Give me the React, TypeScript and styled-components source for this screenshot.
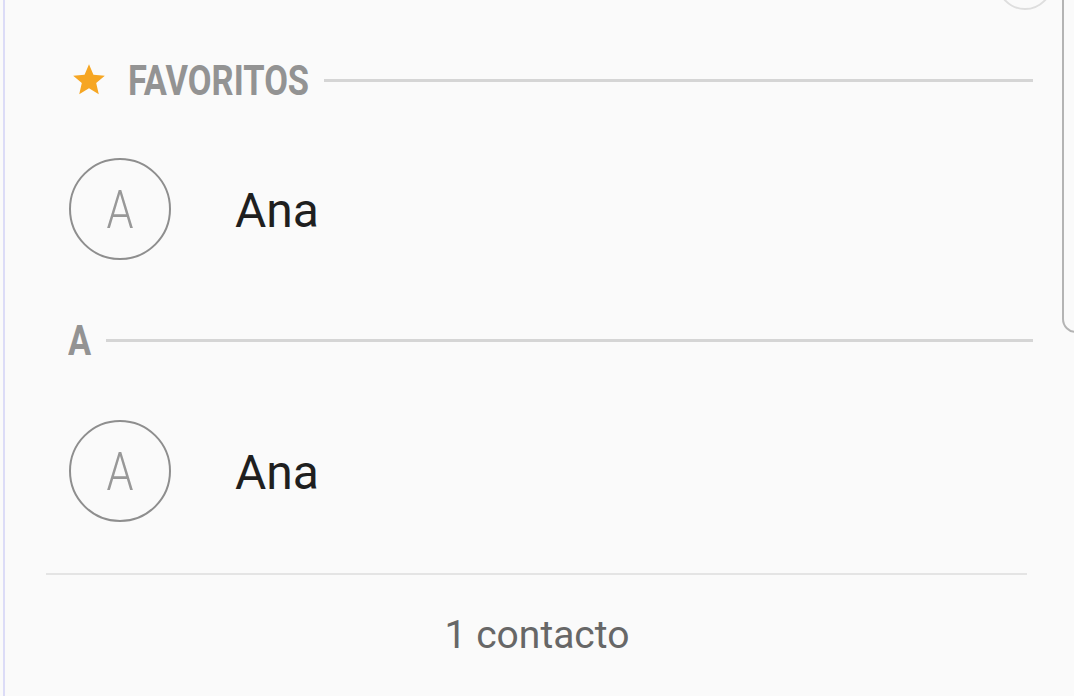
import React from "react";
import styled, { createGlobalStyle } from "styled-components";

const Global = createGlobalStyle`
  html, body { margin: 0; padding: 0; background: #fafafa; }
  body { font-family: Roboto, "Noto Sans", "Liberation Sans", sans-serif; }
`;

const Screen = styled.div`
  position: relative;
  width: 1074px;
  height: 696px;
  overflow: hidden;
  background: #fafafa;
  padding-left: 3px;
  box-sizing: border-box;
`;

const Panel = styled.div`
  height: 100%;
  border-left: 2px solid #dcdcf7;
  display: flex;
  flex-direction: column;
  padding-top: 50px;
  box-sizing: border-box;
`;

const SectionHeader = styled.div<{ $h: number; $left: number }>`
  display: flex;
  align-items: center;
  height: ${(p) => p.$h}px;
  padding-left: ${(p) => p.$left}px;
  padding-right: 41px;
`;

const StarIcon = styled.svg`
  width: 38px;
  height: 38px;
  flex: none;
  margin-right: 20px;
  margin-top: -2px;
`;

const HeaderLabel = styled.span<{ $w: number }>`
  display: inline-block;
  font-family: Roboto, sans-serif;
  font-weight: 700;
  font-size: 42px;
  line-height: 1;
  color: #939393;
  transform: scaleX(0.82);
  transform-origin: left center;
  width: ${(p) => p.$w}px;
  white-space: nowrap;
  flex: none;
`;

const HeaderLine = styled.div`
  flex: 1;
  height: 3px;
  background: #d5d5d5;
  margin-left: 16px;
`;

const ContactRow = styled.div<{ $h: number }>`
  display: flex;
  align-items: center;
  height: ${(p) => p.$h}px;
  padding-left: 64px;
`;

const Avatar = styled.div`
  width: 98px;
  height: 98px;
  border: 2px solid #8e8e8e;
  border-radius: 50%;
  display: flex;
  align-items: center;
  justify-content: center;
  flex: none;
`;

const AvatarLetter = styled.span`
  font-family: Roboto, sans-serif;
  font-weight: 300;
  font-size: 54px;
  line-height: 1;
  color: #989898;
  transform: scaleX(0.8);
  margin-top: 3px;
`;

const Name = styled.span`
  margin-left: 64px;
  font-family: Roboto, sans-serif;
  font-weight: 400;
  font-size: 48px;
  line-height: 1;
  color: #1f1f1f;
  margin-top: 4px;
`;

const Divider = styled.div`
  height: 2px;
  background: #e4e4e4;
  margin: 7px 47px 0 41px;
`;

const Footer = styled.div`
  display: flex;
  justify-content: center;
  align-items: center;
  height: 122px;
  margin-left: -5px;
  font-family: Roboto, sans-serif;
  font-size: 39px;
  line-height: 1;
  color: #676767;
`;

const TopCircle = styled.div`
  position: absolute;
  left: 997px;
  top: -46px;
  width: 52px;
  height: 52px;
  border: 2px solid #dedede;
  border-radius: 50%;
`;

const ScrollIndex = styled.div`
  position: absolute;
  left: 1062px;
  top: -20px;
  width: 40px;
  height: 349px;
  border: 2px solid #b4b4b4;
  border-radius: 14px;
  background: #fafafa;
`;

const Star = () => (
  <StarIcon viewBox="0 0 24 24">
    <path
      fill="#f6a623"
      d="M12 17.27L18.18 21l-1.64-7.03L22 9.24l-7.19-.61L12 2 9.19 8.63 2 9.24l5.46 4.73L5.82 21z"
    />
  </StarIcon>
);

const Contact = ({ name, h }: { name: string; h: number }) => (
  <ContactRow $h={h}>
    <Avatar>
      <AvatarLetter>{name[0]}</AvatarLetter>
    </Avatar>
    <Name>{name}</Name>
  </ContactRow>
);

export default function App() {
  return (
    <>
      <Global />
      <Screen>
        <Panel>
          <SectionHeader $h={62} $left={65}>
            <Star />
            <HeaderLabel $w={180}>FAVORITOS</HeaderLabel>
            <HeaderLine />
          </SectionHeader>
          <Contact name="Ana" h={196} />
          <SectionHeader $h={70} $left={63}>
            <HeaderLabel $w={22}>A</HeaderLabel>
            <HeaderLine />
          </SectionHeader>
          <Contact name="Ana" h={192} />
          <Divider />
          <Footer>1 contacto</Footer>
        </Panel>
        <TopCircle />
        <ScrollIndex />
      </Screen>
    </>
  );
}
